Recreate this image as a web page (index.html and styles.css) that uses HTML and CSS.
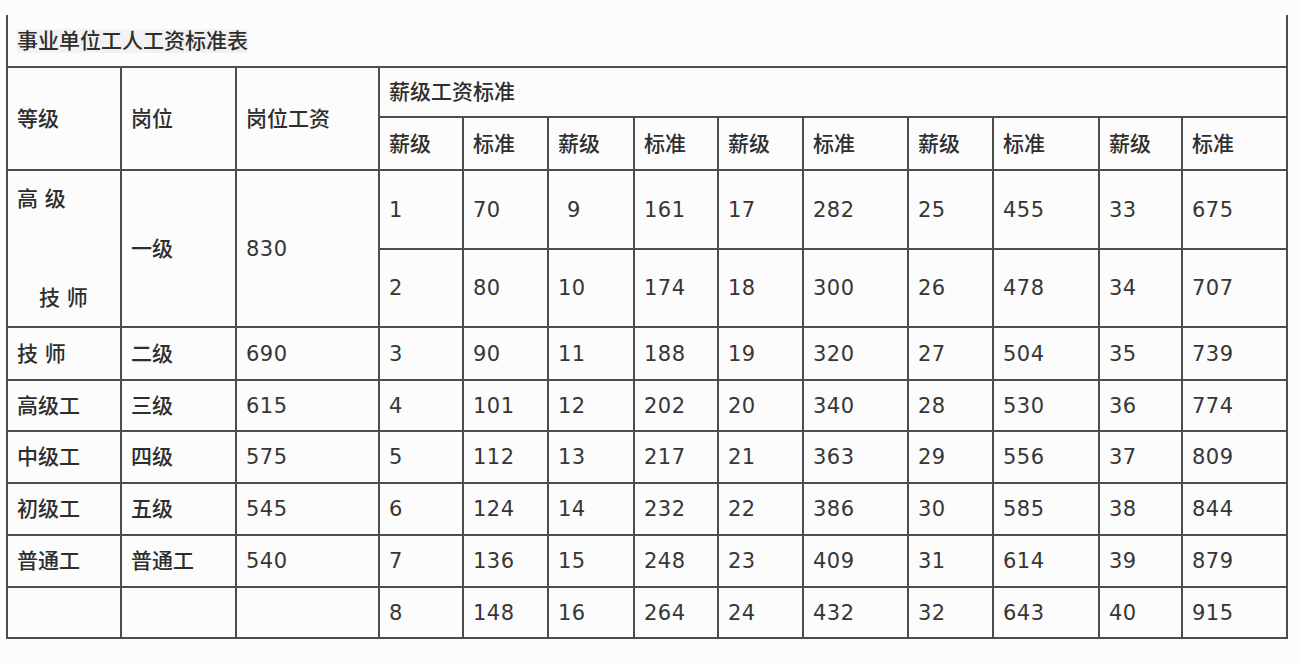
FILE: index.html
```html
<!DOCTYPE html>
<html lang="zh">
<head>
<meta charset="utf-8">
<title>事业单位工人工资标准表</title>
<link rel="stylesheet" href="styles.css">
</head>
<body>
<table class="wage">
  <colgroup>
    <col class="c114"><col class="c115"><col class="c143">
    <col class="c84"><col class="c85"><col class="c86"><col class="c84"><col class="c85">
    <col class="c105"><col class="c85"><col class="c106"><col class="c83"><col class="c105">
  </colgroup>
  <tr class="r-title"><td colspan="13" class="title zh"><span>事业单位工人工资标准表</span></td></tr>
  <tr class="r-h1 zh">
    <td rowspan="2">等级</td>
    <td rowspan="2">岗位</td>
    <td rowspan="2">岗位工资</td>
    <td colspan="10">薪级工资标准</td>
  </tr>
  <tr class="r-h2 zh">
    <td>薪级</td><td>标准</td><td>薪级</td><td>标准</td><td>薪级</td><td>标准</td><td>薪级</td><td>标准</td><td>薪级</td><td>标准</td>
  </tr>
  <tr class="r-tall1">
    <td rowspan="2" class="split zh"><div class="top">高 级</div><div class="bottom">技 师</div></td>
    <td rowspan="2" class="zh">一级</td>
    <td rowspan="2">830</td>
    <td>1</td><td>70</td><td class="ind">9</td><td>161</td><td>17</td><td>282</td><td>25</td><td>455</td><td>33</td><td>675</td>
  </tr>
  <tr class="r-tall2">
    <td>2</td><td>80</td><td>10</td><td>174</td><td>18</td><td>300</td><td>26</td><td>478</td><td>34</td><td>707</td>
  </tr>
  <tr class="r53">
    <td class="zh">技 师</td><td class="zh">二级</td><td>690</td>
    <td>3</td><td>90</td><td>11</td><td>188</td><td>19</td><td>320</td><td>27</td><td>504</td><td>35</td><td>739</td>
  </tr>
  <tr class="r51">
    <td class="zh">高级工</td><td class="zh">三级</td><td>615</td>
    <td>4</td><td>101</td><td>12</td><td>202</td><td>20</td><td>340</td><td>28</td><td>530</td><td>36</td><td>774</td>
  </tr>
  <tr class="r52">
    <td class="zh">中级工</td><td class="zh">四级</td><td>575</td>
    <td>5</td><td>112</td><td>13</td><td>217</td><td>21</td><td>363</td><td>29</td><td>556</td><td>37</td><td>809</td>
  </tr>
  <tr class="r52">
    <td class="zh">初级工</td><td class="zh">五级</td><td>545</td>
    <td>6</td><td>124</td><td>14</td><td>232</td><td>22</td><td>386</td><td>30</td><td>585</td><td>38</td><td>844</td>
  </tr>
  <tr class="r52">
    <td class="zh">普通工</td><td class="zh">普通工</td><td>540</td>
    <td>7</td><td>136</td><td>15</td><td>248</td><td>23</td><td>409</td><td>31</td><td>614</td><td>39</td><td>879</td>
  </tr>
  <tr class="r51">
    <td></td><td></td><td></td>
    <td>8</td><td>148</td><td>16</td><td>264</td><td>24</td><td>432</td><td>32</td><td>643</td><td>40</td><td>915</td>
  </tr>
</table>
</body>
</html>
```

FILE: styles.css
```css
html, body {
  margin: 0;
  padding: 0;
  background: #fcfcfc;
}

.wage {
  border-collapse: collapse;
  table-layout: fixed;
  width: 1282px;
  margin: 15px 0 0 6px;
  font-family: "DejaVu Sans", "Noto Sans CJK SC", sans-serif;
  font-size: 21px;
  color: #363636;
  letter-spacing: 0.5px;
}

.c114 { width: 114px; }
.c115 { width: 115px; }
.c143 { width: 143px; }
.c84 { width: 84px; }
.c85 { width: 85px; }
.c86 { width: 86px; }
.c105 { width: 105px; }
.c106 { width: 106px; }
.c83 { width: 83px; }

.wage td {
  border: 2px solid #4d4d4d;
  padding: 0 0 0 9px;
  vertical-align: middle;
  white-space: nowrap;
  line-height: 24px;
}

.wage .zh,
.wage .zh td {
  font-weight: 500;
  color: #2e2e2e;
  letter-spacing: 0;
}

.wage td.title {
  border-top: none;
  padding-left: 9px;
}

.title span {
  background: #f2f2f2;
}

.r-title { height: 52px; }
.r-h1 { height: 50px; }
.r-h2 { height: 53px; }
.r-tall1 { height: 79px; }
.r-tall2 { height: 78px; }
.r53 { height: 53px; }
.r52 { height: 52px; }
.r51 { height: 51px; }

.wage td.split {
  vertical-align: top;
  padding-top: 16px;
}

.split .bottom {
  margin-top: 75px;
  padding-left: 22px;
}

.wage td.ind {
  padding-left: 18px;
}
```
